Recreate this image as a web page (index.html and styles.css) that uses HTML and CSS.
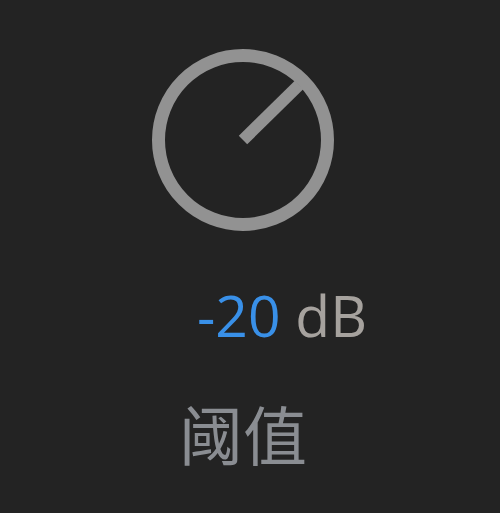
FILE: index.html
```html
<!DOCTYPE html>
<html lang="zh-CN">
<head>
<meta charset="utf-8">
<title>阈值</title>
<link rel="stylesheet" href="styles.css">
</head>
<body>
  <div class="knob-panel">
    <svg class="knob" width="182" height="182" viewBox="0 0 182 182" aria-hidden="true">
      <circle cx="91" cy="91" r="84.5" fill="none" stroke="#929292" stroke-width="13"/>
      <line x1="91" y1="91" x2="147" y2="36" stroke="#929292" stroke-width="12" stroke-linecap="butt"/>
    </svg>
    <div class="value"><span class="num">-20</span> <span class="unit">dB</span></div>
    <div class="label">阈值</div>
  </div>
</body>
</html>
```
FILE: styles.css
```css
html, body {
  margin: 0;
  padding: 0;
  background: #232323;
}

body {
  width: 500px;
  height: 513px;
  overflow: hidden;
}

.knob-panel {
  width: 486px;
  padding-top: 49px;
  display: flex;
  flex-direction: column;
  align-items: center;
}

.knob {
  display: block;
}

.value {
  margin-top: 56px;
  padding-left: 78px;
  font-family: "Open Sans", "Noto Sans", sans-serif;
  font-size: 57px;
  line-height: 1;
  white-space: nowrap;
}

.value .num {
  color: #3990e8;
}

.value .unit {
  color: #a6a29e;
}

.label {
  margin-top: 56px;
  font-family: "Noto Sans CJK SC", "Noto Sans", sans-serif;
  font-size: 64px;
  line-height: 1;
  color: #8a8d92;
}
```
